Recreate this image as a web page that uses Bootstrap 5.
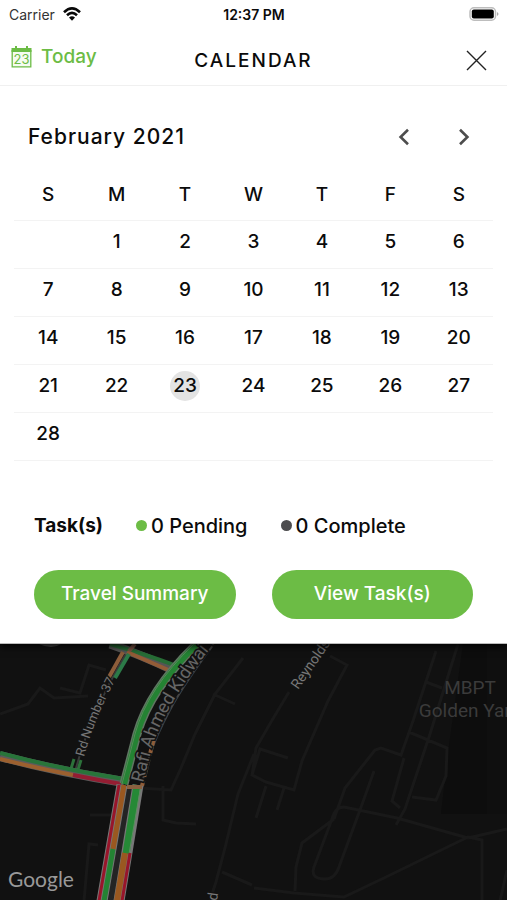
<!DOCTYPE html>
<html lang="en">
<head>
<meta charset="utf-8">
<meta name="viewport" content="width=device-width, initial-scale=1">
<title>Calendar</title>
<link href="https://cdn.jsdelivr.net/npm/bootstrap@5.3.0/dist/css/bootstrap.min.css" rel="stylesheet">
<style>
  body { font-family: Inter, "Liberation Sans", sans-serif; font-weight: 500; color: #0b0b0b; background: #111; }
  .sheet { box-shadow: 0 2px 8px #000; border-bottom: 1px solid #bbb; }
  .status-bar { height: 28px; padding: 0 8px 0 9px; font-size: 14px; }
  .side { flex: 1 1 0; }
  .carrier { font-weight: 400; color: #333; }
  .clock { font-weight: 600; }
  .title-bar { height: 58px; padding: 0 20px 14px 11px; border-bottom: 1px solid #f0f0f0; }
  .title-bar h1 { font-size: 19px; line-height: 20px; font-weight: 500; letter-spacing: 2px; padding-left: 9px; }
  .bare { border: 0; padding: 0; background: none; color: inherit; font-weight: inherit; line-height: inherit; }
  .today { color: #6cbc45; font-size: 19px; gap: 9px; }
  .month-bar { padding: 33px 25px 0 28px; height: 84px; }
  .month-bar h2 { font-size: 21px; font-weight: 500; letter-spacing: 1px; line-height: 36px; }
  .step { width: 36px; height: 36px; color: #4d4d4d; }
  .month-wrap { padding: 0 14px; }
  .month { table-layout: fixed; font-size: 19px; line-height: 30px; text-align: center; }
  .month th, .month td { height: 48px; padding: 0 0 5px; vertical-align: middle; border-bottom: 1px solid #f3f3f3; font-weight: 500; }
  .month thead th { height: 50px; padding: 0; }
  .day { width: 32px; height: 30px; }
  .chosen { width: 30px; background: #e3e3e3; border-radius: 50%; }
  .tasks { padding: 50px 34px 0; font-size: 20px; line-height: 30px; gap: 33px; }
  .tasks strong { font-size: 19px; font-weight: 700; }
  .dot { width: 11px; height: 11px; background: #4d4d4f; }
  .dot-pending { background: #6cbc45; }
  .actions { padding: 29px 34px 24px; gap: 36px; }
  .action { flex: 1 1 0; height: 49px; color: #fff; background: #6cbc45; font-size: 19px; font-weight: 500; padding: 0; }
  .action:hover { color: #fff; background: #5ead38; }
  .map { flex: 1 0 240px; min-height: 0; overflow: hidden; }
  .map text { font-family: Roboto, "Liberation Sans", sans-serif; font-weight: 400; }
  .map .logo { font-family: Lato, sans-serif; }
</style>
<script src="https://cdn.jsdelivr.net/npm/bootstrap@5.3.0/dist/js/bootstrap.bundle.min.js"></script>
</head>
<body class="min-vh-100 d-flex flex-column">
<main class="sheet bg-white position-relative">
  <div class="status-bar d-flex align-items-center">
    <div class="side carrier d-flex align-items-center gap-2">
      <span>Carrier</span>
      <svg width="18" height="14" viewBox="0 0 18 14" fill="none" stroke="#080808" stroke-width="2.6" aria-label="Wi-Fi" role="img"><path d="M1 5.2Q9-2.4 17 5.2M4 8.3Q9 3.6 14 8.3"/><path d="M6 10.6Q9 7.8 12 10.6L9 13.7Z" fill="#080808" stroke="none"/></svg>
    </div>
    <span class="clock">12:37 PM</span>
    <div class="side text-end">
      <svg class="d-block ms-auto" width="30" height="14" viewBox="0 0 30 14" aria-label="Battery full" role="img"><rect x="1" y=".8" width="25.5" height="12.4" rx="4" fill="#fff" stroke="#bdbdbd" stroke-width="1.5"/><rect x="2.8" y="2.6" width="22" height="8.8" rx="2" fill="#000"/><path d="M28 5q3 2 0 4z" fill="#aaa"/></svg>
    </div>
  </div>

  <header class="title-bar d-flex align-items-end">
    <div class="side"><button class="bare today d-flex align-items-center" type="button">
      <svg width="21" height="22" viewBox="0 0 21 22" aria-hidden="true"><path d="M1.2 4v16.8h18.6V4" fill="#f5fbf1" stroke="#6cbc45" stroke-width="1.3"/><path d="M.5 2h20v4H.5zM4 0h2v3H4zm11 0h2v3h-2z" fill="#6cbc45"/><text x="10.5" y="18" font-size="13" font-weight="400" text-anchor="middle" fill="#6cbc45">23</text></svg>
      <span>Today</span></button></div>
    <h1 class="mb-0">CALENDAR</h1>
    <div class="side d-flex justify-content-end"><button class="bare" type="button" aria-label="Close">
      <svg class="d-block" width="21" height="21" viewBox="0 0 21 21" fill="none" stroke="#222" stroke-width="1.4"><path d="M1 1l19 19M20 1L1 20"/></svg></button></div>
  </header>

  <div class="month-bar d-flex align-items-start justify-content-between">
    <h2 class="mb-0">February 2021</h2>
    <div class="d-flex gap-4">
      <button class="bare step d-flex align-items-center justify-content-center" type="button" aria-label="Previous month"><svg width="12" height="18" viewBox="0 0 12 18" fill="none" stroke="currentColor" stroke-width="2.6"><path d="M10 1.8L2.6 9l7.4 7.2"/></svg></button>
      <button class="bare step d-flex align-items-center justify-content-center" type="button" aria-label="Next month"><svg width="12" height="18" viewBox="0 0 12 18" fill="none" stroke="currentColor" stroke-width="2.6"><path d="M2 1.8L9.400 9 2 16.200"/></svg></button>
    </div>
  </div>

  <div class="month-wrap">
    <table class="month w-100">
      <thead><tr><th scope="col">S</th><th scope="col">M</th><th scope="col">T</th><th scope="col">W</th><th scope="col">T</th><th scope="col">F</th><th scope="col">S</th></tr></thead>
      <tbody>
        <tr><td></td><td><button class="bare day" type="button">1</button></td><td><button class="bare day" type="button">2</button></td><td><button class="bare day" type="button">3</button></td><td><button class="bare day" type="button">4</button></td><td><button class="bare day" type="button">5</button></td><td><button class="bare day" type="button">6</button></td></tr>
        <tr><td><button class="bare day" type="button">7</button></td><td><button class="bare day" type="button">8</button></td><td><button class="bare day" type="button">9</button></td><td><button class="bare day" type="button">10</button></td><td><button class="bare day" type="button">11</button></td><td><button class="bare day" type="button">12</button></td><td><button class="bare day" type="button">13</button></td></tr>
        <tr><td><button class="bare day" type="button">14</button></td><td><button class="bare day" type="button">15</button></td><td><button class="bare day" type="button">16</button></td><td><button class="bare day" type="button">17</button></td><td><button class="bare day" type="button">18</button></td><td><button class="bare day" type="button">19</button></td><td><button class="bare day" type="button">20</button></td></tr>
        <tr><td><button class="bare day" type="button">21</button></td><td><button class="bare day" type="button">22</button></td><td><button class="bare day chosen" type="button" aria-pressed="true">23</button></td><td><button class="bare day" type="button">24</button></td><td><button class="bare day" type="button">25</button></td><td><button class="bare day" type="button">26</button></td><td><button class="bare day" type="button">27</button></td></tr>
        <tr><td><button class="bare day" type="button">28</button></td><td></td><td></td><td></td><td></td><td></td><td></td></tr>
      </tbody>
    </table>
  </div>

  <div class="tasks d-flex align-items-center">
    <strong>Task(s)</strong>
    <span class="d-flex align-items-center gap-1"><span class="dot dot-pending rounded-circle"></span>0 Pending</span>
    <span class="d-flex align-items-center gap-1"><span class="dot rounded-circle"></span>0 Complete</span>
  </div>
  <div class="actions d-flex">
    <button class="btn action rounded-pill" type="button">Travel Summary</button>
    <button class="btn action rounded-pill" type="button">View Task(s)</button>
  </div>
</main>

<section class="map d-flex" aria-label="Map">
  <svg class="w-100 flex-grow-1" height="257" viewBox="0 0 507 257" preserveAspectRatio="xMidYMin slice">
    <rect width="507" height="257" fill="#111"/>
    <path d="M463 0h44v170h-66l8-68z" fill="#0d0d0d"/>
    <path d="M487 0h20v170h-20z" fill="#0f0f0f"/>
    <!-- side streets and building outlines -->
    <g fill="none" stroke="#191919" stroke-width="3">
      <path d="M330 12l17 9-19 36-26 60-8 29-28-8-14-7 8-26 28 9M289 48l-18 30-15 26-4 28M266 142l-10 32M284 144l-7 22M243 14l-28 36-20 40-14 34-10 22-33-2M163 142v34l13 3 20 1M213 50l22 10M254 110l-16 40-12 50-10 38-6 18M222 228l30 13M254 244l40 5 50 4 42-20 82-40 14 3v61M468 194l39-9M507 226l-7 31M468 194l-71-20-53-11q-9 0-12 12l-18 48q-4 12 11 12 10 0 14-12l25-68 10-28M334 175l11-31 30-38 6-2 20 7 12-34 23-70M458 0l-28 90-25 75-9 16M426 38l16 6M409 88l38 16-1 28-10 24-24-3M404 114l-12 43 8 7M334 175l-32 24-6 24-1 24"/>
      <path d="M0 70l28-10 12-16 14 10 34-2M60 44l20 5 9-28 17 5M90 171h24M98 201l-9-1-5 57"/>
    </g>
    <path d="M39 0h22q-9 6-22 0" fill="#4a4a4a"/>
    <!-- traffic roads -->
    <g fill="none">
      <path d="M75 128Q90 70 127 8" stroke="#3a3a3a" stroke-width="2"/>
      <path d="M110 0q32 11 65 27" stroke="#555" stroke-width="9"/>
      <path d="M110 0q32 9 67 22" stroke="#276d36" stroke-width="4"/>
      <path d="M127 8l46 20" stroke="#935c37" stroke-width="4"/>
      <path d="M135 0l-6 7" stroke="#795344" stroke-width="4"/>
      <path d="M123 8l-14 25" stroke="#8d5d3b" stroke-width="4"/>
      <path d="M129 10l-14 24" stroke="#2c7a48" stroke-width="4"/>
      <path d="M74 115l-4 13M81 116l-4 13" stroke="#2c713a" stroke-width="3"/>
      <path d="M0 112q60 16 124 26" stroke="#5c5c5c" stroke-width="10"/>
      <path d="M0 109q60 16 124 26" stroke="#28753a" stroke-width="4"/>
      <path d="M0 115q36 9 73 16" stroke="#9c602f" stroke-width="4"/>
      <path d="M73 131q25 5 48 9" stroke="#941d32" stroke-width="4"/>
      <path d="M214 0Q184 40 170 66T148 116l-7 27" stroke="#444" stroke-width="2"/>
      <path d="M154 94l-12 48" stroke="#8f5d39" stroke-width="4" stroke-dasharray="18 4"/>
      <path d="M197 0Q150 45 137 90l-13 50" stroke="#5f7562" stroke-width="9"/>
      <path d="M197 0Q150 45 137 90l-13 50" stroke="#248333" stroke-width="6"/>
      <path d="M194 0Q147 45 135 90l-13 50" stroke="#57895a" stroke-width="1"/>
      <path d="M131 143l-21 114" stroke="#242424" stroke-width="22"/>
      <path d="M122 141L102 257" stroke="#777" stroke-width="11"/>
      <path d="M138 141L119 257" stroke="#777" stroke-width="11"/>
      <path d="M119 141L99 257" stroke="#98152a" stroke-width="3"/>
      <path d="M124 141l-11 64" stroke="#9a5820" stroke-width="5"/>
      <path d="M113 205l-9 52" stroke="#248333" stroke-width="5"/>
      <path d="M137 141l-11 69" stroke="#258936" stroke-width="7"/>
      <path d="M141 141l-12 69" stroke="#5c8e60" stroke-width="1"/>
      <path d="M125 209l-8 48" stroke="#9a5820" stroke-width="6"/>
      <path d="M130 209l-8 48" stroke="#98152a" stroke-width="3"/>
      <path d="M127 143h15" stroke="#89603f" stroke-width="4"/>
    </g>
    <defs><path id="rafi" d="M143 139L153 100Q168 56 214 0L240-34"/><path id="rd37" d="M84 113Q96 69 122 24"/></defs>
    <g fill="#777" stroke="#121212" stroke-width="3" paint-order="stroke">
      <text font-size="18" fill="#666"><textPath href="#rafi">Rafi Ahmed Kidwai R</textPath></text>
      <text font-size="13"><textPath href="#rd37">Rd Number 37</textPath></text>
      <text font-size="14" transform="translate(298 46) rotate(-55)">Reynolds</text>
      <text font-size="14" transform="translate(217 257) rotate(-82)">d</text>
    </g>
    <g font-size="19" fill="#3b3b3b" text-anchor="middle"><text x="470" y="50">MBPT</text><text x="470" y="73">Golden Yard</text></g>
    <text class="logo" x="8" y="243" font-size="21" fill="#999" stroke="#111" stroke-width="3" paint-order="stroke">Google</text>
  </svg>
</section>
</body>
</html>
